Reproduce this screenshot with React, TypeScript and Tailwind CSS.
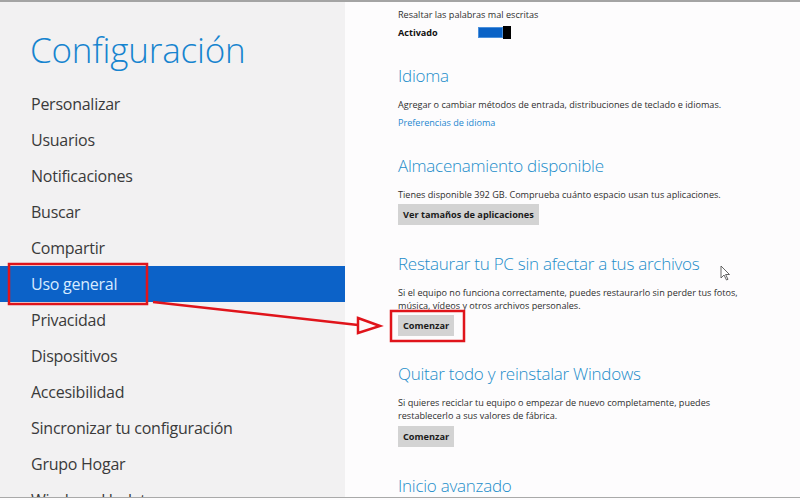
import React from "react";

const menu = [
  "Personalizar",
  "Usuarios",
  "Notificaciones",
  "Buscar",
  "Compartir",
  "Uso general",
  "Privacidad",
  "Dispositivos",
  "Accesibilidad",
  "Sincronizar tu configuración",
  "Grupo Hogar",
  "Windows Update",
];

const font = { fontFamily: '"Open Sans", "Noto Sans", sans-serif' };

const Heading = ({ children, className = "" }: { children: React.ReactNode; className?: string }) => (
  <h2 className={`text-[17px] font-light leading-[24px] tracking-[-0.25px] text-[#238dca] ${className}`}>
    {children}
  </h2>
);

const Button = ({ children, className = "" }: { children: React.ReactNode; className?: string }) => (
  <button className={`h-[21px] px-[5px] bg-[#d3d3d3] text-[9.2px] font-bold text-[#1b1b1b] ${className}`}>
    {children}
  </button>
);

export default function App() {
  return (
    <div className="relative w-[800px] h-[500px] flex flex-col overflow-hidden bg-[#fdfcfd]" style={font}>
      <div className="h-[2px] bg-[#a4a4a4]" />
      <div className="flex flex-1 overflow-hidden">
        {/* Left settings menu */}
        <aside className="w-[345px] shrink-0 bg-[#f2f1f2]">
          <h1 className="mt-[24px] pl-[30px] text-[35px] font-light leading-[48px] tracking-[-0.2px] text-[#1684cf]">
            Configuración
          </h1>
          <ul className="mt-[12px]">
            {menu.map((item) => (
              <li
                key={item}
                className={`h-9 flex items-center pl-[31px] text-[16px] tracking-[-0.25px] ${
                  item === "Uso general" ? "bg-[#0c62c8] text-[#d7ebff]" : "text-[#3a3a3a]"
                }`}
              >
                {item}
              </li>
            ))}
          </ul>
        </aside>

        {/* Right content */}
        <main className="flex-1 pl-[53px] text-[9.1px] leading-[13px] text-[#2e2e2e]">
          <p className="mt-[6px]">Resaltar las palabras mal escritas</p>
          <div className="mt-[4px] h-[14px] flex items-center">
            <span className="w-[80px] font-bold text-[#111]">Activado</span>
            <div className="flex items-center">
              <div className="w-[25px] h-[11px] bg-[#0a62c6] border border-[#4a90dc]" />
              <div className="w-[8px] h-[13px] bg-black" />
            </div>
          </div>

          <Heading className="mt-[25px]">Idioma</Heading>
          <p className="mt-[10px]">Agregar o cambiar métodos de entrada, distribuciones de teclado e idiomas.</p>
          <p className="mt-[5px] text-[#1e88d0]">Preferencias de idioma</p>

          <Heading className="mt-[25px]">Almacenamiento disponible</Heading>
          <p className="mt-[10px]">Tienes disponible 392 GB. Comprueba cuánto espacio usan tus aplicaciones.</p>
          <Button className="mt-[3px]">Ver tamaños de aplicaciones</Button>

          <Heading className="mt-[27px]">Restaurar tu PC sin afectar a tus archivos</Heading>
          <p className="mt-[10px] w-[345px]">
            Si el equipo no funciona correctamente, puedes restaurarlo sin perder tus fotos, música, vídeos y otros
            archivos personales.
          </p>
          <Button className="mt-[3px]">Comenzar</Button>

          <Heading className="mt-[26px]">Quitar todo y reinstalar Windows</Heading>
          <p className="mt-[10px] w-[330px]">
            Si quieres reciclar tu equipo o empezar de nuevo completamente, puedes restablecerlo a sus valores de
            fábrica.
          </p>
          <Button className="mt-[4px]">Comenzar</Button>

          <Heading className="mt-[27px]">Inicio avanzado</Heading>
        </main>
      </div>
      <div className="h-[1px] bg-[#a9a9a9]" />
      <div className="h-[2px] bg-[#fdfcfd]" />

      {/* Annotation overlay */}
      <svg className="absolute inset-0 pointer-events-none" width="800" height="500" viewBox="0 0 800 500">
        <rect x="9" y="264" width="138" height="40" fill="none" stroke="#e0141b" strokeWidth="2.5" />
        <rect x="391" y="311" width="73" height="30" fill="none" stroke="#e0141b" strokeWidth="2.5" />
        <line x1="153" y1="302" x2="358" y2="325" stroke="#e0141b" strokeWidth="2.5" />
        <polygon points="358,318 380,326 358,333" fill="none" stroke="#e0141b" strokeWidth="2.5" strokeLinejoin="miter" />
        {/* mouse cursor */}
        <path d="M721 266 L721 278 L724 275 L726.5 280 L728 279.3 L725.6 274.5 L729.5 274.5 Z" fill="#fff" stroke="#555" strokeWidth="0.9" />
      </svg>
    </div>
  );
}
